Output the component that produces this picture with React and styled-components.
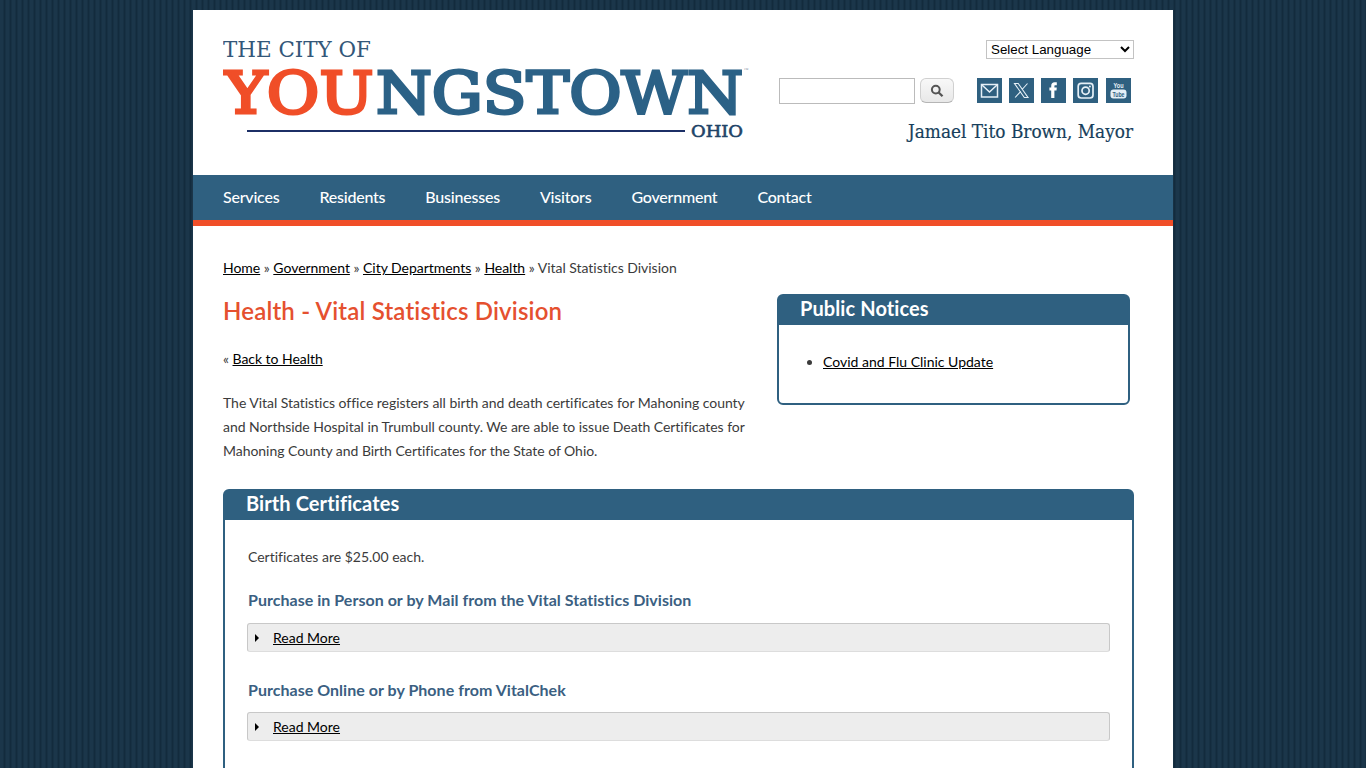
import React from "react";
import styled, { createGlobalStyle } from "styled-components";

const GlobalStyle = createGlobalStyle`
  html,
  body {
    margin: 0;
    height: 768px;
    overflow: hidden;
  }
  body {
    background: repeating-linear-gradient(
      90deg,
      #1b364a 0,
      #1b364a 3px,
      #173144 3px,
      #173144 4px,
      #132b3d 4px,
      #132b3d 5px,
      #173144 5px,
      #173144 6px
    );
    color: #3b3b3b;
    font-family: Lato, sans-serif;
    font-size: 14px;
    line-height: 24px;
    font-variant-ligatures: none;
  }
  a {
    color: #000;
  }
`;

const Page = styled.div`
  box-sizing: border-box;
  width: 980px;
  height: 758px;
  margin: 10px auto 0;
  background: #fff;
  overflow: hidden;
`;

const Header = styled.header`
  display: flex;
  justify-content: space-between;
  height: 165px;
  padding: 0 39px 0 30px;
  box-sizing: border-box;
`;

const Logo = styled.svg`
  display: block;
  width: 530px;
  height: 110px;
  margin-top: 25px;
`;

const Tools = styled.div`
  display: flex;
  flex-direction: column;
  align-items: flex-end;
  width: 355px;
  padding-top: 30px;
`;

const Language = styled.select`
  width: 148px;
  height: 19px;
  padding: 0;
  border: 1px solid #c3c3c3;
  background: #fff;
  color: #000;
  font: 13.333px "Liberation Sans", Arial, sans-serif;
`;

const ToolRow = styled.div`
  display: flex;
  width: 100%;
  height: 26px;
  margin-top: 19px;
`;

const SearchInput = styled.input`
  box-sizing: border-box;
  width: 136px;
  height: 26px;
  border: 1px solid #bbb;
  padding: 0 4px;
`;

const SearchButton = styled.button`
  display: flex;
  align-items: center;
  justify-content: center;
  box-sizing: border-box;
  width: 34px;
  height: 25px;
  margin: 0 23px 0 5px;
  padding: 0;
  border: 1px solid #d0d0d0;
  border-bottom-color: #b5b5b5;
  border-radius: 6px;
  background: linear-gradient(#f8f8f8, #e8e8e8);
`;

const Socials = styled.div`
  display: flex;
  gap: 7px;
`;

const SocialIcon = styled.svg`
  display: block;
  width: 25px;
  height: 25px;
  background: #2f6080;
  &:last-child {
    margin-left: 1px;
  }
`;

const Mayor = styled.svg`
  display: block;
  width: 236px;
  height: 34px;
  margin: 10px -4px 0 0;
  overflow: visible;
`;

const Nav = styled.nav`
  display: flex;
  gap: 40px;
  height: 45px;
  padding-left: 30px;
  background: #2f6080;
  border-bottom: 6px solid #f04e28;
`;

const NavItem = styled.a`
  color: #fff;
  font-size: 16px;
  font-weight: 500;
  letter-spacing: -0.22px;
  line-height: 44px;
  text-decoration: none;
`;

const Content = styled.main`
  padding: 30px 39px 0 30px;
`;

const Breadcrumb = styled.div`
  height: 24px;
  letter-spacing: -0.03px;
`;

const Intro = styled.div`
  display: flex;
  justify-content: space-between;
  height: 209px;
  padding: 14px 4px 0 0;
  box-sizing: border-box;
`;

const IntroText = styled.div`
  width: 530px;
`;

const Title = styled.h1`
  margin: 3px 0 22px;
  color: #e5502f;
  font-size: 24px;
  font-weight: 600;
  letter-spacing: 0.18px;
  line-height: 28px;
`;

const Paragraph = styled.p`
  margin: 0 0 20px;
  letter-spacing: -0.04px;
`;

const Panel = styled.section`
  box-sizing: border-box;
  width: ${({ $width }) => $width};
  height: ${({ $height }) => $height};
  border: 2px solid #2f6080;
  border-radius: 6px;
`;

const PanelTitle = styled.h2`
  height: 29px;
  margin: 0;
  padding-left: 21px;
  background: #2f6080;
  color: #fff;
  font-size: 20px;
  font-weight: 700;
  letter-spacing: 0.1px;
  line-height: 24px;
`;

const NoticeList = styled.ul`
  margin: 25px 0 0;
  padding-left: 44px;
`;

const PanelBody = styled.div`
  padding: 25px 22px 0;
`;

const PanelText = styled.p`
  margin: 0 0 0 1px;
`;

const SubTitle = styled.h3`
  margin: ${({ $margin }) => $margin};
  color: #3b5f82;
  font-size: 16px;
  font-weight: 700;
  letter-spacing: 0.03px;
  line-height: 24px;
`;

const ReadMore = styled.div`
  display: flex;
  align-items: center;
  box-sizing: border-box;
  height: 29px;
  padding-left: 7px;
  border: 1px solid #c8c8c8;
  border-bottom-color: #ddd;
  border-radius: 3px;
  background: #ededed;
`;

const Arrow = styled.span`
  width: 0;
  height: 0;
  margin-right: 14px;
  border: 4px solid transparent;
  border-left: 4px solid #000;
  border-right: 0;
`;

const slab = "'DejaVu Serif', serif";

const navItems = [
  "Services",
  "Residents",
  "Businesses",
  "Visitors",
  "Government",
  "Contact",
];

const crumbs = ["Home", "Government", "City Departments", "Health"];

// The outlines even out the thick and thin strokes, so the serif reads as a slab.
const CityLogo = () => (
  <Logo viewBox="0 0 530 110" fontFamily={slab}>
    <text
      x="0"
      y="21.5"
      fontSize="22"
      fill="#335779"
      textLength="148"
      lengthAdjust="spacingAndGlyphs"
    >
      THE CITY OF
    </text>
    <g fontSize="57.5" strokeWidth="3">
      <text
        x="1.5"
        y="78.2"
        fill="#f04e28"
        stroke="#f04e28"
        textLength="149"
        lengthAdjust="spacingAndGlyphs"
      >
        YOU
      </text>
      <text
        x="153"
        y="78.2"
        fill="#2b6186"
        stroke="#2b6186"
        textLength="367"
        lengthAdjust="spacingAndGlyphs"
      >
        NGSTOWN
      </text>
    </g>
    <rect x="24" y="95" width="438" height="2" fill="#1c2f66" />
    <text
      x="468"
      y="102"
      fontSize="16.5"
      fill="#1f4468"
      stroke="#1f4468"
      strokeWidth="0.6"
      textLength="52"
      lengthAdjust="spacingAndGlyphs"
    >
      OHIO
    </text>
    <text x="521" y="34.5" fontSize="2.5" fill="#1f4468">
      TM
    </text>
  </Logo>
);

const SocialLinks = () => (
  <Socials>
    <SocialIcon viewBox="0 0 25 25" fill="none" stroke="#e6f0f7" strokeWidth="1.5">
      <rect x="4.5" y="6.5" width="16" height="12.5" />
      <path d="M5 7l7.5 7L20 7" />
    </SocialIcon>
    <SocialIcon viewBox="0 0 25 25" fill="none" stroke="#e6f0f7" strokeWidth="1.1">
      <path d="M5.5 5.5h3.7L19 19.5h-3.7zM18.5 5.5l-5.4 6M11.8 13.3l-5.7 6.2" />
    </SocialIcon>
    <SocialIcon viewBox="0 0 25 25" fill="#fff">
      <path d="M10.2 20v-7.5H8.4V9.6h1.8V8c0-2.5 1.3-3.7 3.4-3.7h2.2v2.9h-1.4c-.8 0-1 .4-1 1v1.4h2.4l-.3 2.9h-2.1V20z" />
    </SocialIcon>
    <SocialIcon viewBox="0 0 25 25" fill="none" stroke="#e6f0f7" strokeWidth="1.7">
      <rect x="5.2" y="5.4" width="14.8" height="14.6" rx="3" />
      <circle cx="12.6" cy="12.7" r="3.6" />
      <circle cx="16.9" cy="8.5" r="1" fill="#e6f0f7" stroke="none" />
    </SocialIcon>
    <SocialIcon
      viewBox="0 0 25 25"
      fill="#e6f0f7"
      fontFamily="'Liberation Sans', sans-serif"
      fontWeight="700"
      fontSize="8"
    >
      <text x="7.5" y="10.3" textLength="10" lengthAdjust="spacingAndGlyphs">
        You
      </text>
      <rect x="4.5" y="11.5" width="16" height="9" rx="3" />
      <text x="6.5" y="18.9" fill="#2f6080" textLength="12" lengthAdjust="spacingAndGlyphs">
        Tube
      </text>
    </SocialIcon>
  </Socials>
);

const ExpandRow = () => (
  <ReadMore>
    <Arrow />
    <a href="#more">Read More</a>
  </ReadMore>
);

const App = () => {
  return (
    <>
      <GlobalStyle />
      <Page>
        <Header>
          <CityLogo />
          <Tools>
            <Language>
              <option>Select Language</option>
            </Language>
            <ToolRow>
              <SearchInput />
              <SearchButton>
                <svg width="14" height="14" viewBox="0 0 14 14" fill="none" stroke="#555">
                  <circle cx="5.8" cy="5.6" r="3.9" strokeWidth="2" />
                  <path d="M8.7 8.5l3.8 3.8" strokeWidth="2.3" />
                </svg>
              </SearchButton>
              <SocialLinks />
            </ToolRow>
            <Mayor viewBox="0 0 236 34" fontFamily={slab}>
              <text
                x="6"
                y="23.5"
                fontSize="18"
                fill="#173f5c"
                stroke="#173f5c"
                strokeWidth="0.2"
                textLength="225"
                lengthAdjust="spacingAndGlyphs"
              >
                Jamael Tito Brown, Mayor
              </text>
            </Mayor>
          </Tools>
        </Header>
        <Nav>
          {navItems.map((item) => (
            <NavItem href="#nav" key={item}>
              {item}
            </NavItem>
          ))}
        </Nav>
        <Content>
          <Breadcrumb>
            {crumbs.map((crumb) => (
              <React.Fragment key={crumb}>
                <a href="#crumb">{crumb}</a> »{" "}
              </React.Fragment>
            ))}
            Vital Statistics Division
          </Breadcrumb>
          <Intro>
            <IntroText>
              <Title>Health - Vital Statistics Division</Title>
              <Paragraph>
                « <a href="#health">Back to Health</a>
              </Paragraph>
              <Paragraph>
                The Vital Statistics office registers all birth and death certificates for
                Mahoning county and Northside Hospital in Trumbull county. We are able to
                issue Death Certificates for Mahoning County and Birth Certificates for the
                State of Ohio.
              </Paragraph>
            </IntroText>
            <Panel $width="353px" $height="111px">
              <PanelTitle>Public Notices</PanelTitle>
              <NoticeList>
                <li>
                  <a href="#notice">Covid and Flu Clinic Update</a>
                </li>
              </NoticeList>
            </Panel>
          </Intro>
          <Panel $width="911px" $height="400px">
            <PanelTitle>Birth Certificates</PanelTitle>
            <PanelBody>
              <PanelText>Certificates are $25.00 each.</PanelText>
              <SubTitle $margin="19px 0 11px 1px">
                Purchase in Person or by Mail from the Vital Statistics Division
              </SubTitle>
              <ExpandRow />
              <SubTitle $margin="26px 0 10px 1px">
                Purchase Online or by Phone from VitalChek
              </SubTitle>
              <ExpandRow />
            </PanelBody>
          </Panel>
        </Content>
      </Page>
    </>
  );
};

export default App;
